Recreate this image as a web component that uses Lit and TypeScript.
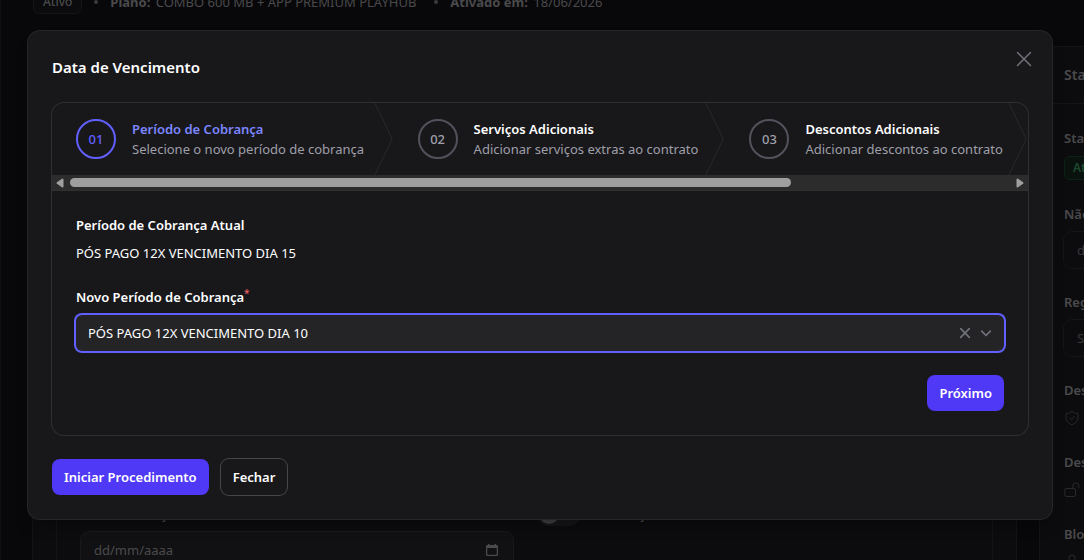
import { LitElement, html, css, svg, nothing } from "lit";
import { customElement, state } from "lit/decorators.js";
import { classMap } from "lit/directives/class-map.js";

interface Step {
  id: string;
  title: string;
  text: string;
}

const STEPS: Step[] = [
  { id: "01", title: "Período de Cobrança", text: "Selecione o novo período de cobrança" },
  { id: "02", title: "Serviços Adicionais", text: "Adicionar serviços extras ao contrato" },
  { id: "03", title: "Descontos Adicionais", text: "Adicionar descontos ao contrato" },
];

/** Contract page that stays dimmed behind the dialog. */
@customElement("contract-page")
class ContractPage extends LitElement {
  static styles = css`
    :host {
      display: block;
      height: 100%;
      box-sizing: border-box;
      border-left: 1px solid #101012;
      padding-left: 32px;
      overflow: hidden;
      background: #08080a;
      color: #4a4a4c;
    }
    .summary {
      display: flex;
      align-items: center;
      height: 24px;
      margin-top: -10px;
      white-space: nowrap;
    }
    .tag {
      box-sizing: border-box;
      height: 24px;
      padding: 0 9px;
      border: 1px solid #151517;
      border-radius: 6px;
      background: #0b0b0d;
      font-size: 12px;
      font-weight: 500;
      line-height: 22px;
    }
    .dot {
      width: 4px;
      height: 4px;
      margin: 0 12px;
      border-radius: 50%;
      background: #3a3a3c;
    }
    .summary b {
      margin-right: 2px;
      font-weight: 700;
    }
    .wide {
      margin-right: 6px;
    }
    .columns {
      display: flex;
      gap: 24px;
      margin-top: 33px;
    }
    .main {
      flex: 0 0 calc(100% - 68px);
      box-sizing: border-box;
      padding: 24px;
      background: #0c0c0e;
      box-shadow: 0 0 0 1px #141416;
    }
    .card {
      box-sizing: border-box;
      padding: 433px 24px 40px;
      background: #0c0c0e;
      box-shadow: 0 0 0 1px #141416;
    }
    .grid {
      display: grid;
      grid-template-columns: 1fr 1fr;
      gap: 24px;
    }
    .label {
      display: block;
      font-weight: 600;
    }
    .date {
      display: flex;
      align-items: center;
      justify-content: space-between;
      box-sizing: border-box;
      height: 36px;
      margin-top: 8px;
      padding: 0 15px 0 13px;
      border-radius: 8px;
      background: #111113;
      box-shadow: 0 0 0 1px #19191b;
    }
    .date svg {
      flex: none;
    }
    input[type="text"] {
      min-width: 0;
      flex: 1;
      padding: 0;
      border: 0;
      outline: 0;
      background: none;
      color: inherit;
      font: inherit;
    }
    input::placeholder {
      color: #4a4a4c;
      opacity: 1;
    }
    .aside-date input::placeholder {
      color: #38383a;
    }
    .switch {
      display: flex;
      align-items: center;
      gap: 12px;
      height: 24px;
      margin-top: -2px;
      font-weight: 600;
    }
    .switch input {
      appearance: none;
      box-sizing: border-box;
      width: 44px;
      height: 24px;
      margin: 0;
      padding: 2px;
      border-radius: 12px;
      background: #151517;
    }
    .switch input::before {
      content: "";
      display: block;
      width: 20px;
      height: 20px;
      border-radius: 50%;
      background: #404042;
    }
    aside {
      flex: 0 0 320px;
      box-sizing: border-box;
      background: #0c0c0e;
      box-shadow: 0 0 0 1px #141416;
    }
    h2 {
      margin: 0;
      padding: 16px 24px;
      border-bottom: 1px solid #141416;
      font-size: 14px;
      font-weight: 600;
      line-height: 24px;
    }
    .status {
      display: grid;
      gap: 24px;
      padding: 24px;
    }
    .badge {
      display: block;
      box-sizing: border-box;
      width: fit-content;
      height: 24px;
      margin-top: 8px;
      padding: 0 8px;
      border: 1px solid #0c2217;
      border-radius: 6px;
      background: #0a120e;
      color: #1c4a30;
      font-size: 12px;
      font-weight: 600;
      line-height: 22px;
    }
    .aside-date {
      background: none;
      box-shadow: 0 0 0 1px #151517;
    }
    .glyph {
      display: flex;
      height: 20px;
      margin-top: 8px;
      align-items: center;
    }
  `;

  private _field(id: string, label: string, hint: string, aside = false, icon = false) {
    return html`<div>
      <label class="label" for=${id}>${label}</label>
      <div class=${classMap({ date: true, "aside-date": aside })}>
        <input id=${id} type="text" placeholder=${hint} />
        ${icon
          ? html`<svg width="12" height="14" viewBox="0 0 12 14" aria-hidden="true">
              <path
                fill="#4a4a4c"
                fill-rule="evenodd"
                d="M2 1h1.500v1h5V1H10v1h.8A1.200 1.200 0 0 1 12 3.200v8.600a1.200 1.200 0 0 1-1.200 1.200H1.200A1.200 1.200 0 0 1 0 11.800V3.200A1.200 1.200 0 0 1 1.200 2H2zM1.300 5v6.700h9.400V5z"
              />
            </svg>`
          : nothing}
      </div>
    </div>`;
  }

  private _glyph(label: string, shape: unknown) {
    return html`<div>
      <span class="label">${label}</span>
      <span class="glyph">
        <svg
          width="16"
          height="16"
          viewBox="0 0 16 16"
          fill="none"
          stroke="#29292b"
          stroke-linecap="round"
          stroke-linejoin="round"
          aria-hidden="true"
        >
          ${shape}
        </svg>
      </span>
    </div>`;
  }

  render() {
    return html`
      <div class="summary">
        <span class="tag">Ativo</span>
        <span class="dot"></span>
        <span class="wide"><b>Plano:</b> COMBO 600 MB + APP PREMIUM PLAYHUB</span>
        <span class="dot"></span>
        <span><b>Ativado em:</b> 18/06/2026</span>
      </div>
      <div class="columns">
        <section class="main">
          <div class="card">
            <div class="grid">
              ${this._field("start", "Data Cobrança", "dd/mm/aaaa", false, true)}
              <label class="switch"><input type="checkbox" />Cobrança</label>
            </div>
          </div>
        </section>
        <aside>
          <h2>Status</h2>
          <div class="status">
            <div>
              <span class="label">Status</span>
              <span class="badge">Ativo</span>
            </div>
            ${this._field("until", "Não bloquear", "dd/mm/aaaa", true)}
            ${this._field("rule", "Regra", "Selecione", true)}
            ${this._glyph(
              "Desbloqueio",
              svg`<path d="M8 1.500c1.700 1.200 3.600 1.900 6 2v4c0 3.400-2.300 6-6 7.200-3.700-1.200-6-3.800-6-7.200v-4c2.400-.1 4.300-.8 6-2z"/><path d="m5.800 8.200 1.600 1.600 2.900-3.400"/>`
            )}
            ${this._glyph(
              "Desativar",
              svg`<rect x=".8" y="6.500" width="10.700" height="8" rx="1.500"/><path d="M8.800 6.500V4a3 3 0 0 1 6 0v1.800"/>`
            )}
            ${this._glyph(
              "Bloqueio",
              svg`<rect x="2.500" y="6.500" width="11" height="8" rx="1.500"/><path d="M5 6.500V4a3 3 0 0 1 6 0v2.500"/>`
            )}
          </div>
        </aside>
      </div>
    `;
  }
}

/** Horizontal progress strip with its scroll bar. */
@customElement("step-strip")
class StepStrip extends LitElement {
  static styles = css`
    :host {
      display: block;
    }
    ol {
      display: grid;
      grid-template-columns: 35% 34% 31%;
      margin: 0;
      padding: 0;
      list-style: none;
      overflow: hidden;
    }
    li {
      position: relative;
      display: flex;
      align-items: center;
      gap: 16px;
      box-sizing: border-box;
      height: 72px;
      padding: 0 24px;
      white-space: nowrap;
    }
    .num {
      flex: none;
      box-sizing: border-box;
      width: 40px;
      height: 40px;
      border: 2px solid #52525c;
      border-radius: 50%;
      color: #9f9fa9;
      font-weight: 500;
      line-height: 36px;
      text-align: center;
    }
    .title {
      display: block;
      color: #fff;
      font-weight: 600;
    }
    .text {
      display: block;
      color: #9f9fa9;
    }
    .current .num {
      border-color: #615fff;
      color: #615fff;
    }
    .current .title {
      color: #7c86ff;
    }
    .arrow {
      position: absolute;
      top: 0;
      right: 0;
      width: 20px;
      height: 100%;
    }
    .bar {
      display: flex;
      align-items: center;
      gap: 6px;
      box-sizing: border-box;
      height: 16px;
      padding: 0 4px;
      border-bottom: 1px solid #303032;
      background: #2c2c2c;
    }
    .bar svg {
      flex: none;
    }
    .track {
      flex: 1;
    }
    .thumb {
      width: 76.7%;
      height: 9px;
      border-radius: 5px;
      background: #9f9f9f;
    }
  `;

  render() {
    return html`
      <ol>
        ${STEPS.map(
          (s, i) => html`<li class=${classMap({ current: i === 0 })}>
            <span class="num">${s.id}</span>
            <span>
              <span class="title">${s.title}</span>
              <span class="text">${s.text}</span>
            </span>
            <svg class="arrow" viewBox="0 0 22 80" fill="none" preserveAspectRatio="none" aria-hidden="true">
              <path
                d="M0 -2L20 40L0 82"
                stroke="#29292c"
                vector-effect="non-scaling-stroke"
                stroke-linejoin="round"
              />
            </svg>
          </li>`
        )}
      </ol>
      <div class="bar" aria-hidden="true">
        <svg width="8" height="10" viewBox="0 0 8 10">
          <path d="M6.500 1.500v7L1.500 5z" fill="#9f9f9f" stroke="#9f9f9f" stroke-width="2" stroke-linejoin="round" />
        </svg>
        <div class="track"><div class="thumb"></div></div>
        <svg width="8" height="10" viewBox="0 0 8 10">
          <path d="M1.500 1.500v7l5-3.500z" fill="#9f9f9f" stroke="#9f9f9f" stroke-width="2" stroke-linejoin="round" />
        </svg>
      </div>
    `;
  }
}

@customElement("app-root")
class AppRoot extends LitElement {
  static styles = css`
    :host {
      position: relative;
      display: block;
      height: 100vh;
      overflow: hidden;
      background: #08080a;
      color: #fff;
      font: 13px/20px "Noto Sans", "Open Sans", sans-serif;
    }
    .overlay {
      position: absolute;
      inset: 0;
      display: flex;
      align-items: flex-start;
      justify-content: center;
      padding: 31px 32px 31px 28px;
    }
    .dialog {
      flex: 1;
      max-width: 1024px;
      box-sizing: border-box;
      padding: 24px;
      border-radius: 12px;
      background: #18181b;
      box-shadow: 0 0 0 1px #262629, 0 10px 15px -3px rgba(0, 0, 0, 0.3);
    }
    header {
      display: flex;
      align-items: flex-start;
      justify-content: space-between;
      height: 24px;
      margin-bottom: 24px;
    }
    h1 {
      margin: 0;
      font-size: 15px;
      font-weight: 600;
      line-height: 24px;
    }
    button {
      margin: 0;
      border: 0;
      padding: 0 12px;
      height: 36px;
      border-radius: 8px;
      background: none;
      color: #fff;
      font: inherit;
      font-weight: 600;
      cursor: pointer;
    }
    .icon {
      display: grid;
      place-items: center;
      padding: 0;
      height: 24px;
      width: 24px;
      color: #71717b;
    }
    .close {
      margin: -8px -8px 0 0;
    }
    .panel {
      overflow: hidden;
      border-radius: 12px;
      box-shadow: 0 0 0 1px #2f2f32;
    }
    .body {
      padding: 24px;
    }
    dl {
      margin: 0 0 24px;
    }
    dt {
      font-weight: 600;
    }
    dd {
      margin: 8px 0 0;
    }
    .label {
      display: block;
      font-weight: 600;
    }
    .required {
      color: #ff6467;
      font-size: 10px;
      line-height: 0;
      vertical-align: 5px;
      font-weight: 400;
    }
    .field {
      display: flex;
      align-items: center;
      height: 36px;
      margin-top: 8px;
      padding: 0 8px 0 12px;
      border-radius: 6px;
      background: #242427;
      box-shadow: 0 0 0 2px #615fff;
    }
    select {
      appearance: none;
      flex: 1;
      min-width: 0;
      height: 100%;
      padding: 0;
      border: 0;
      outline: 0;
      background: none;
      color: #fff;
      font: inherit;
    }
    .field .icon {
      width: 21px;
    }
    .next {
      display: flex;
      justify-content: flex-end;
      margin-top: 24px;
    }
    .primary {
      background: #4f39f6;
    }
    .outline {
      box-shadow: 0 0 0 1px #46464a;
    }
    footer {
      display: flex;
      gap: 12px;
      margin-top: 24px;
    }
  `;

  @state() private _period = "10";

  private _change(e: Event) {
    this._period = (e.target as HTMLSelectElement).value;
  }

  private _clear() {
    this._period = "";
  }

  render() {
    return html`
      <contract-page></contract-page>
      <div class="overlay">
        <div class="dialog" role="dialog" aria-modal="true" aria-labelledby="title">
          <header>
            <h1 id="title">Data de Vencimento</h1>
            <button class="icon close" aria-label="Fechar janela">
              <svg width="16" height="16" viewBox="0 0 16 16" stroke="currentColor" stroke-width="1.500" stroke-linecap="round">
                <path d="m1.500 1.500 13 13m0-13-13 13" />
              </svg>
            </button>
          </header>
          <div class="panel">
            <step-strip></step-strip>
            <div class="body">
              <dl>
                <dt>Período de Cobrança Atual</dt>
                <dd>PÓS PAGO 12X VENCIMENTO DIA 15</dd>
              </dl>
              <label class="label" for="period"
                >Novo Período de Cobrança<span class="required">*</span></label
              >
              <div class="field">
                <select id="period" .value=${this._period} @change=${this._change}>
                  <option value="10">PÓS PAGO 12X VENCIMENTO DIA 10</option>
                </select>
                <button class="icon" aria-label="Limpar" @click=${this._clear}>
                  <svg width="12" height="12" viewBox="0 0 12 12" stroke="currentColor" stroke-width="1.700" stroke-linecap="round">
                    <path d="m1.700 1.700 8.600 8.600m0-8.600-8.600 8.600" />
                  </svg>
                </button>
                <span class="icon">
                  <svg width="12" height="12" viewBox="0 0 12 12" fill="none" stroke="currentColor" stroke-width="1.700" stroke-linecap="round" stroke-linejoin="round">
                    <path d="m1.700 4.200 4.300 4.300 4.300-4.300" />
                  </svg>
                </span>
              </div>
              <div class="next"><button class="primary">Próximo</button></div>
            </div>
          </div>
          <footer>
            <button class="primary">Iniciar Procedimento</button>
            <button class="outline">Fechar</button>
          </footer>
        </div>
      </div>
    `;
  }
}
